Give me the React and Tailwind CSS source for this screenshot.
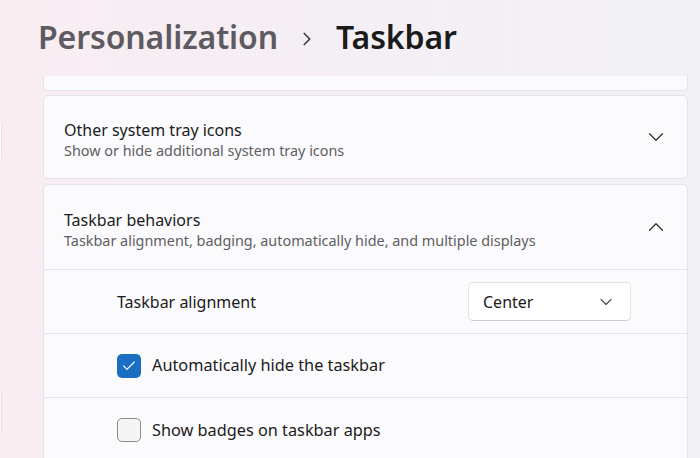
import { ChevronDown, ChevronUp, ChevronRight, Check } from "lucide-react";

const font = { fontFamily: '"Noto Sans", "Open Sans", sans-serif' };

function Checkbox({ checked }) {
    return checked ? (
        <div className="w-6 h-6 rounded-[5px] bg-[#1b6ec2] flex items-center justify-center">
            <Check size={16} strokeWidth={1.6} className="text-white" />
        </div>
    ) : (
        <div className="w-6 h-6 rounded-[5px] border border-[#8b8a8c] bg-[#f6f4f4]" />
    );
}

export default function App() {
    return (
        <div
            className="w-[700px] h-[458px] overflow-hidden bg-gradient-to-r from-[#f9edf2] via-[#f4eff5] to-[#f2f1f6] flex flex-col"
            style={font}
        >
            {/* Header */}
            <div className="h-[76px] shrink-0 flex items-center pl-[38px] pb-[2px] gap-[18px]">
                <span className="text-[32px] font-semibold text-[#5d5b61] tracking-[-0.1px]">Personalization</span>
                <ChevronRight size={22} strokeWidth={1.8} className="text-[#3a3a3a] mt-[3px]" />
                <span className="text-[32px] font-semibold text-[#1b1b1b] tracking-[-0.1px]">Taskbar</span>
            </div>

            <div className="flex">
                {/* left strip */}
                <div className="w-[43px] shrink-0 flex flex-col">
                    <div className="h-[46px]" />
                    <div className="w-[2px] h-[38px] rounded-r bg-[#ffffff] border-r border-[#e7e2e6]" />
                    <div className="h-[232px]" />
                    <div className="w-[2px] h-[40px] rounded-r bg-[#fbf4f4] border-r border-[#e7e2e6]" />
                </div>

                <div className="w-[645px] shrink-0 flex flex-col gap-[4px]">
                    {/* clipped card */}
                    <div className="h-[15px] bg-[#fbfafc] border-x border-b border-[#e5e2e8] rounded-b-[5px]" />

                    {/* Other system tray icons */}
                    <div className="h-[84px] bg-[#fbfafd] border border-[#e5e2e8] rounded-[5px] flex items-center pl-[20px] pr-[18px] pt-[6px]">
                        <div className="flex-1 flex flex-col">
                            <span className="text-[16px] leading-[22px] text-[#1b1b1b]">Other system tray icons</span>
                            <span className="text-[14.4px] leading-[20px] text-[#5f5d62]">Show or hide additional system tray icons</span>
                        </div>
                        <ChevronDown size={26} strokeWidth={1.1} className="text-[#2b2b2b] -mt-[6px]" />
                    </div>

                    {/* Taskbar behaviors */}
                    <div className="bg-[#fbfafc] border border-[#e5e2e8] rounded-t-[5px] flex flex-col mt-[1px]">
                        <div className="h-[85px] flex items-center pl-[20px] pr-[18px] pt-[6px] border-b border-[#e5e2e8]">
                            <div className="flex-1 flex flex-col">
                                <span className="text-[16px] leading-[22px] text-[#1b1b1b]">Taskbar behaviors</span>
                                <span className="text-[14.4px] leading-[20px] text-[#5f5d62]">
                                    Taskbar alignment, badging, automatically hide, and multiple displays
                                </span>
                            </div>
                            <ChevronUp size={26} strokeWidth={1.1} className="text-[#2b2b2b] -mt-[6px]" />
                        </div>

                        <div className="h-[64px] flex items-center pl-[73px] pr-[56px] border-b border-[#e5e2e8]">
                            <span className="flex-1 text-[16px] text-[#1b1b1b] pt-[1px]">Taskbar alignment</span>
                            <div className="w-[163px] h-[39px] bg-white border border-[#e3e1e4] border-b-[#cfcdd0] rounded-[5px] flex items-center pl-[14px] pr-[14px]">
                                <span className="flex-1 text-[16px] text-[#1b1b1b]">Center</span>
                                <ChevronDown size={20} strokeWidth={1.3} className="text-[#4a4a4a]" />
                            </div>
                        </div>

                        <div className="h-[64px] flex items-center pl-[73px] gap-[11px] border-b border-[#e5e2e8]">
                            <Checkbox checked />
                            <span className="text-[16.3px] text-[#1b1b1b]">Automatically hide the taskbar</span>
                        </div>

                        <div className="h-[64px] flex items-center pl-[73px] gap-[11px]">
                            <Checkbox />
                            <span className="text-[16.3px] text-[#1b1b1b]">Show badges on taskbar apps</span>
                        </div>
                    </div>
                </div>
            </div>
        </div>
    );
}
